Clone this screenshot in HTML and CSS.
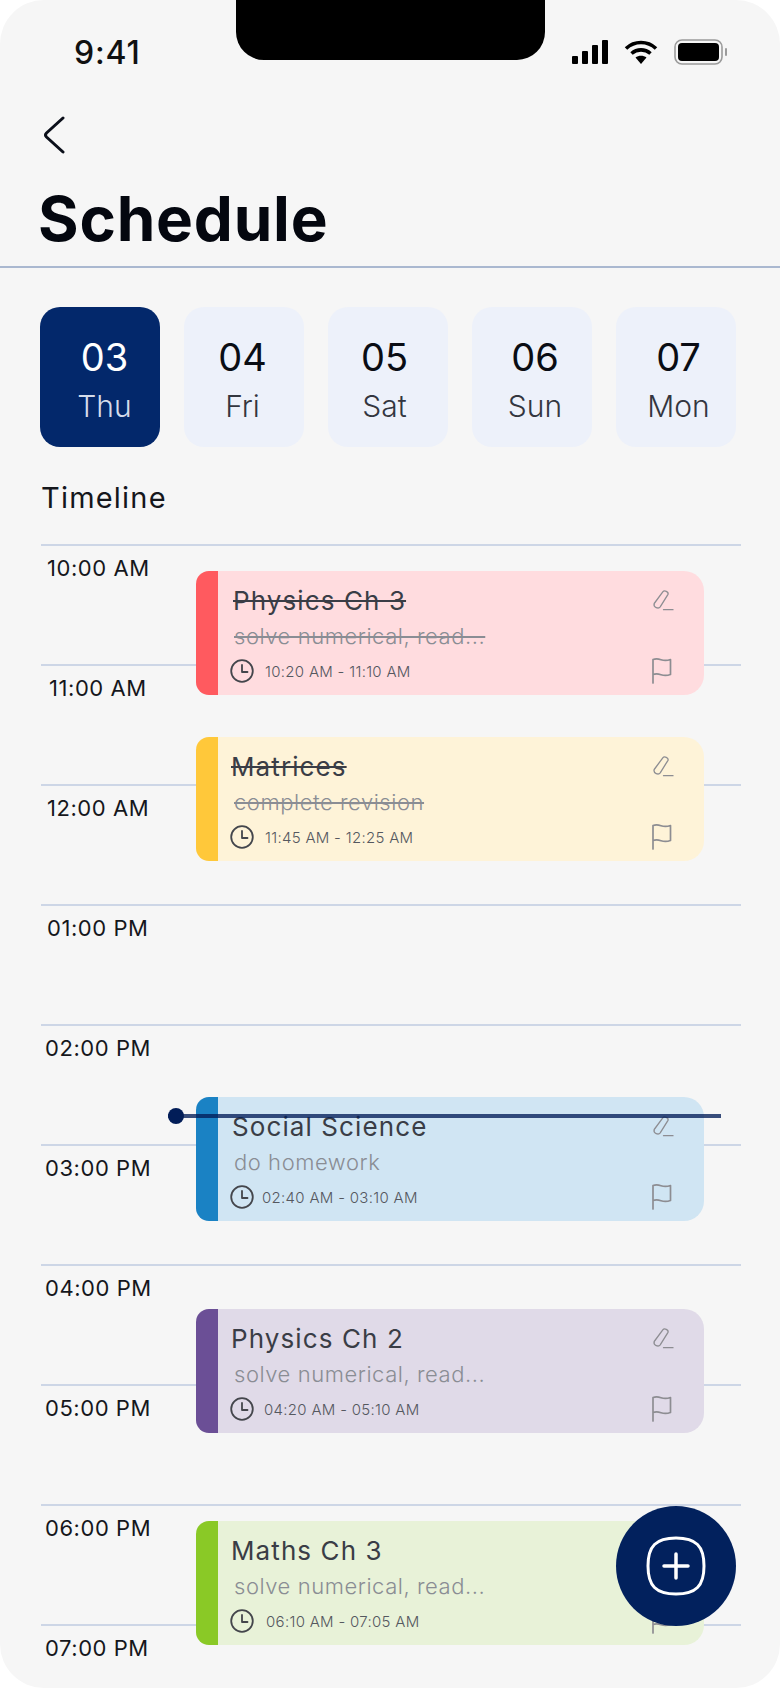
FILE: index.html
```html
<!DOCTYPE html>
<html>
<head>
  <meta charset="UTF-8">
  <title>Schedule</title>
  <link rel="stylesheet" href="styles.css">
</head>
<body>
<svg width="0" height="0" class="defs">
  <symbol id="clock" viewBox="0 0 24 24"><circle cx="12" cy="12" r="10.8" fill="none" stroke="currentColor" stroke-width="1.8"/><path d="M12 6v7h5.5" fill="none" stroke="currentColor" stroke-width="1.8" stroke-linecap="round" stroke-linejoin="round"/></symbol>
  <symbol id="pencil" viewBox="0 0 22 22"><path d="M2.200 14.500 10.800 2.800c1.500-1.900 6-.2 5.200 2.500L8.200 17.800c-1.500 2.200-7.200 1-6-3.300ZM11.500 20.700h9.500" fill="none" stroke="currentColor" stroke-width="1.300" stroke-linecap="round" stroke-linejoin="round"/></symbol>
  <symbol id="flag" viewBox="0 0 22 27"><path d="M2 26V2.500c3.500-1.200 5-.8 8 .2 3.500 1.100 6 1 9.500-.2v15c-3.500 1.200-6 1.300-9.500.2-3-1-4.500-1.400-8-.2" fill="none" stroke="currentColor" stroke-width="1.700" stroke-linecap="round" stroke-linejoin="round"/></symbol>
</svg>

<div class="screen">
  <div class="notch"></div>

  <div class="statusBar">
    <span class="clockText">9:41</span>
    <div class="statusIcons">
      <svg width="36" height="24" viewBox="0 0 36 24"><rect x="0" y="16" width="6" height="8" rx="1"/><rect x="10" y="11" width="6" height="13" rx="1"/><rect x="20" y="5" width="6" height="19" rx="1"/><rect x="30" y="0" width="6" height="24" rx="1"/></svg>
      <svg width="34" height="24" viewBox="0 0 34 24"><path d="M2 8.500c8.500-8 21.500-8 30 0M7.500 13.500c5.500-4.800 13.500-4.800 19 0" fill="none" stroke="#000" stroke-width="3.600"/><path d="M17 24l-5.500-6.500c3-2.500 8-2.500 11 0Z"/></svg>
      <svg width="54" height="26" viewBox="0 0 54 26"><rect x="1" y="1" width="47" height="24" rx="7" fill="none" stroke="#9b9b9b" stroke-width="1.600"/><rect x="4" y="4" width="41" height="18" rx="4"/><rect x="51" y="9" width="2" height="8" rx="1" fill="#9b9b9b"/></svg>
    </div>
  </div>

  <div class="pageHead">
    <svg class="back" width="22" height="38" viewBox="0 0 22 38"><path d="M20 2 3.500 17c-1.200 1.200-1.200 2.800 0 4L20 36" fill="none" stroke="#0b0f1a" stroke-width="3" stroke-linecap="round"/></svg>
    <h1>Schedule</h1>
  </div>

  <div class="days">
    <div class="day active thu"><b>03</b><span>Thu</span></div>
    <div class="day fri"><b>04</b><span>Fri</span></div>
    <div class="day sat"><b>05</b><span>Sat</span></div>
    <div class="day sun"><b>06</b><span>Sun</span></div>
    <div class="day mon"><b>07</b><span>Mon</span></div>
  </div>

  <h2>Timeline</h2>

  <div class="timeline">
    <div class="hour nudge">10:00 AM</div>
    <div class="hour nudgeMore">11:00 AM</div>
    <div class="hour nudge">12:00 AM</div>
    <div class="hour nudge">01:00 PM</div>
    <div class="hour">02:00 PM</div>
    <div class="hour">03:00 PM</div>
    <div class="hour">04:00 PM</div>
    <div class="hour">05:00 PM</div>
    <div class="hour">06:00 PM</div>
    <div class="hour">07:00 PM</div>

    <div class="events">
      <div class="event red done">
        <div class="info">
          <div class="title">Physics Ch 3</div>
          <div class="desc">solve numerical, read...</div>
          <div class="when"><svg><use href="#clock"/></svg>10:20 AM - 11:10 AM</div>
        </div>
        <div class="tools"><svg class="pencil"><use href="#pencil"/></svg><svg class="flag"><use href="#flag"/></svg></div>
      </div>
      <div class="event yellow done">
        <div class="info">
          <div class="title">Matrices</div>
          <div class="desc">complete revision</div>
          <div class="when"><svg><use href="#clock"/></svg>11:45 AM - 12:25 AM</div>
        </div>
        <div class="tools"><svg class="pencil"><use href="#pencil"/></svg><svg class="flag"><use href="#flag"/></svg></div>
      </div>
      <div class="event blue">
        <div class="info">
          <div class="title">Social Science</div>
          <div class="desc">do homework</div>
          <div class="when"><svg><use href="#clock"/></svg>02:40 AM - 03:10 AM</div>
        </div>
        <div class="tools"><svg class="pencil"><use href="#pencil"/></svg><svg class="flag"><use href="#flag"/></svg></div>
      </div>
      <div class="event purple">
        <div class="info">
          <div class="title">Physics Ch 2</div>
          <div class="desc">solve numerical, read...</div>
          <div class="when"><svg><use href="#clock"/></svg>04:20 AM - 05:10 AM</div>
        </div>
        <div class="tools"><svg class="pencil"><use href="#pencil"/></svg><svg class="flag"><use href="#flag"/></svg></div>
      </div>
      <div class="event green">
        <div class="info">
          <div class="title">Maths Ch 3</div>
          <div class="desc">solve numerical, read...</div>
          <div class="when"><svg><use href="#clock"/></svg>06:10 AM - 07:05 AM</div>
        </div>
        <div class="tools"><svg class="pencil"><use href="#pencil"/></svg><svg class="flag"><use href="#flag"/></svg></div>
      </div>
    </div>

    <div class="nowLine"></div>
  </div>

  <div class="fab">
    <svg width="62" height="62" viewBox="0 0 62 62"><path d="M31 3c20 0 28 8 28 28s-8 28-28 28S3 51 3 31 11 3 31 3Z" fill="none" stroke="#fff" stroke-width="3"/><path d="M31 19v24M19 31h24" fill="none" stroke="#fff" stroke-width="3.500" stroke-linecap="round"/></svg>
  </div>
</div>
</body>
</html>
```

FILE: styles.css
```css
html, body {
  margin: 0;
  padding: 0;
  background-color: #ffffff;
}
.defs {
  position: absolute;
}
.screen {
  position: relative;
  width: 780px;
  height: 1688px;
  overflow: hidden;
  border-radius: 44px;
  background-color: #f6f6f6;
  font-family: Inter, "Noto Sans", sans-serif;
  color: #0b0f1a;
}

/* top of the phone */
.notch {
  position: absolute;
  top: 0;
  left: 236px;
  width: 309px;
  height: 60px;
  background-color: #000;
  border-radius: 0 0 28px 28px;
}
.statusBar {
  display: flex;
  justify-content: space-between;
  align-items: center;
  height: 26px;
  padding: 39px 52px 0px 74px;
}
.clockText {
  font-size: 32px;
  font-weight: 500;
  letter-spacing: 0.8px;
  color: #111;
}
.statusIcons {
  display: flex;
  align-items: center;
  gap: 16px;
}
.pageHead {
  height: 203px;
  box-sizing: border-box;
  padding: 51px 0px 0px 38px;
  border-bottom: 2px solid #aab8d0;
}
.back {
  display: block;
  margin-left: 5px;
}
h1 {
  margin: 29px 0px 0px 0px;
  font-size: 62px;
  line-height: 72px;
  font-weight: 700;
  letter-spacing: 0.8px;
  color: #04070f;
}

/* day picker */
.days {
  display: flex;
  gap: 24px;
  padding: 39px 0px 0px 40px;
}
.day {
  width: 120px;
  height: 140px;
  border-radius: 20px;
  background-color: #edf1fa;
  display: flex;
  flex-direction: column;
  align-items: center;
  padding-top: 27px;
  box-sizing: border-box;
}
.day.thu { padding-left: 9px; }
.day.fri { padding-right: 3px; }
.day.sat { padding-right: 7px; }
.day.sun { padding-left: 6px; }
.day.mon { padding-left: 5px; }
.day b {
  font-size: 38px;
  line-height: 46px;
  font-weight: 400;
  color: #0a0d14;
}
.day span {
  font-size: 30px;
  line-height: 38px;
  margin-top: 7px;
  font-weight: 300;
  color: #33363f;
}
.day.active {
  background-color: #03286b;
}
.day.active b, .day.active span {
  color: #ffffff;
}
.day.active span {
  color: #d5dcea;
}

h2 {
  margin: 32px 0px 27px 41px;
  font-size: 29px;
  line-height: 38px;
  font-weight: 400;
  letter-spacing: 1.2px;
  color: #15171c;
}

/* timeline */
.timeline {
  position: relative;
  width: 700px;
  margin-left: 41px;
}
.hour {
  height: 120px;
  box-sizing: border-box;
  border-top: 2px solid #cdd6e6;
  padding: 9px 0px 0px 4px;
  font-size: 22px;
  line-height: 26px;
  letter-spacing: 0.55px;
  color: #15171c;
}
.hour.nudge {
  padding-left: 6px;
}
.hour.nudgeMore {
  padding-left: 8px;
}
.events {
  position: absolute;
  top: 27px;
  left: 155px;
  width: 508px;
  display: flex;
  flex-direction: column;
}
.event {
  height: 124px;
  box-sizing: border-box;
  border-radius: 13px 20px 20px 13px;
  border-left: 22px solid;
  padding: 15px 30px 0px 13px;
  display: flex;
  justify-content: space-between;
}
.red { border-left-color: #ff5a5f; background-color: #ffdcdf; }
.yellow { border-left-color: #ffc83a; background-color: #fef3d8; margin-top: 42px; }
.blue { border-left-color: #1a82c4; background-color: #d0e5f3; margin-top: 236px; }
.purple { border-left-color: #6b4f96; background-color: #e0dae8; margin-top: 88px; }
.green { border-left-color: #8ac926; background-color: #e8f2d8; margin-top: 88px; }

.title {
  font-size: 26px;
  line-height: 30px;
  letter-spacing: 1.1px;
  color: #3a3d46;
}
.red .title { margin-left: 2px; }
.blue .title { margin-left: 1px; }
.desc {
  margin: 5px 0px 0px 3px;
  font-size: 22px;
  line-height: 30px;
  font-weight: 300;
  letter-spacing: 0.55px;
  color: #8a8d94;
}
.done .title, .done .desc {
  text-decoration: line-through;
}
.when {
  display: flex;
  align-items: center;
  gap: 11px;
  margin: 8px 0px 0px -1px;
  font-size: 15px;
  font-weight: 300;
  letter-spacing: 0.3px;
  color: #55585f;
}
.blue .when { gap: 8px; }
.purple .when { gap: 10px; }
.green .when { gap: 12px; }
.when svg {
  width: 24px;
  height: 24px;
  color: #44464c;
}
.tools {
  display: flex;
  flex-direction: column;
  align-items: flex-end;
  color: #8d8d92;
}
.pencil {
  width: 22px;
  height: 22px;
  margin-top: 3px;
}
.flag {
  width: 22px;
  height: 27px;
  margin: 46px 1px 0px 0px;
}

/* current time marker, over the cards */
.nowLine {
  position: absolute;
  top: 570px;
  left: 127px;
  width: 553px;
  height: 4px;
  background-color: rgba(2, 29, 88, 0.78);
}
.nowLine:before {
  content: "";
  position: absolute;
  top: -6px;
  left: 0px;
  width: 16px;
  height: 16px;
  border-radius: 50%;
  background-color: #021d58;
}

.fab {
  position: absolute;
  top: 1506px;
  left: 616px;
  width: 120px;
  height: 120px;
  border-radius: 50%;
  background-color: #02215d;
  display: flex;
  align-items: center;
  justify-content: center;
}
```
